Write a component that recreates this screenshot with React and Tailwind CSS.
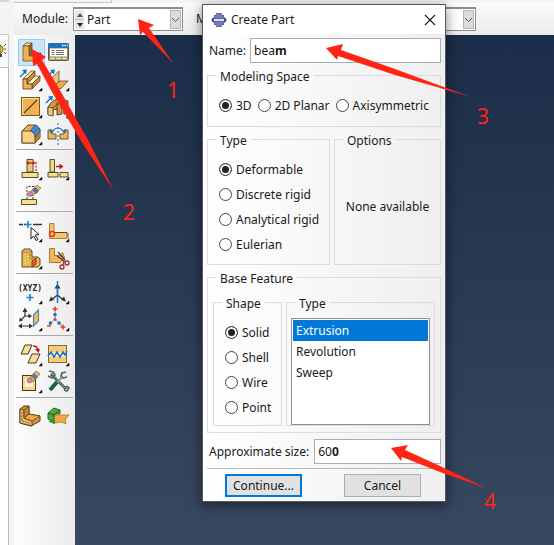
import { useState } from 'react';

const ink = '#4a3a22';

const toolGroups = [
  [
    {
      name: 'Create Part',
      active: true,
      art: (
        <>
          <path d="M5 7l3-3h6l-3 3z" fill="#ffe0a0" stroke={ink} strokeWidth=".7" />
          <path d="M11 7l3-3v9l-3 5z" fill="#9c6a22" stroke={ink} strokeWidth=".7" />
          <path d="M11 17l3-3h9l-3 3z" fill="#a87c38" stroke={ink} strokeWidth=".7" />
          <path d="M20 17l3-3v5l-3 3z" fill="#9c6a22" stroke={ink} strokeWidth=".7" />
          <path d="M5 7h6v10h9v5H5z" fill="#eeb055" stroke="#7a5320" strokeWidth=".8" />
        </>
      ),
    },
    {
      name: 'Part Manager',
      art: (
        <>
          <rect x="3.5" y="4.5" width="20" height="17" rx="1" fill="#8a8a62" stroke="#555a45" />
          <path d="M3 9V6q0-2 2-2h17q2 0 2 2v3z" fill="#1d6fc0" />
          <path d="M17 6.5h1.5M19.5 6.5H21M22 6.5h1" stroke="#fff" strokeWidth="1.4" />
          <path d="M5 9.5h17v8H5z" fill="#fff" />
          <path d="M6.5 11.5h3M6.5 13.5h3M6.5 15.5h3M11 11.5h8M11 13.5h8M11 15.5h8" stroke="#6b6b6b" />
          <path d="M5 18.5h5v2H5zM11 18.5h5v2h-5zM17 18.5h5v2h-5z" fill="#e6dda0" />
        </>
      ),
    },
    {
      name: 'Create Solid Extrude',
      more: true,
      art: (
        <>
          <path d="M5 13l8-8h4l-8 8z" fill="#ffd58c" stroke={ink} strokeWidth=".7" />
          <path d="M9 13l8-8v5l-8 8z" fill="#c88a34" stroke={ink} strokeWidth=".7" />
          <path d="M9 18l8-8h5l-8 8z" fill="#fff0cc" stroke={ink} strokeWidth=".7" />
          <path d="M14 18l8-8v5l-8 8z" fill="#c88a34" stroke={ink} strokeWidth=".7" />
          <path d="M5 13h4v5h5v5H5z" fill="#f2b253" stroke={ink} strokeWidth=".8" />
          <path d="M2 11l5-5" stroke="#1673c9" strokeWidth="1.5" />
          <path d="M4 4l5-.5-1 5z" fill="#1673c9" />
        </>
      ),
    },
    {
      name: 'Create Shell Extrude',
      more: true,
      art: (
        <>
          <path d="M3 10l5-5" stroke="#1673c9" strokeWidth="1.5" />
          <path d="M5 4l5-.5-1 5z" fill="#1673c9" />
          <path d="M7 12l7-7v10l-7 8z" fill="#f3c27b" stroke={ink} strokeWidth=".7" />
          <path d="M7 22.5l7-7.5h9l-7 7.5z" fill="#eda947" stroke={ink} strokeWidth=".7" />
        </>
      ),
    },
    {
      name: 'Create Wire',
      more: true,
      art: (
        <>
          <rect x="3.5" y="4.5" width="18" height="18" fill="#f2b14f" stroke="#77582b" />
          <path d="M4.5 22V5.5h16.5" fill="none" stroke="#ffdf9d" />
          <path d="M6 20L19 7" stroke={ink} strokeWidth="1.1" />
        </>
      ),
    },
    {
      name: 'Create Solid Loft',
      more: true,
      art: (
        <>
          <path d="M3 14q5-9 13-8l7 2v12l-4 1v-7h-2v7l-5 1v-6l-4 1v5l-5-1z" fill="#dd9438" stroke={ink} strokeWidth=".9" />
          <path d="M3 14l5 1v8l-5-1z" fill="#f8c577" stroke={ink} strokeWidth=".8" />
          <path d="M8 15q3-4 8-5l7 1M12 9v8M16 10v5M19 10v11" fill="none" stroke={ink} strokeWidth=".8" />
          <path d="M1 10l5-5" stroke="#1673c9" strokeWidth="1.5" />
          <path d="M3 3.5l5-.5-1 5z" fill="#1673c9" />
        </>
      ),
    },
    {
      name: 'Create Round or Fillet',
      more: true,
      art: (
        <>
          <path d="M4 11l6-6h7l5 4v9l-5 5H4z" fill="#f1ad4b" stroke={ink} strokeWidth=".9" />
          <path d="M17 17l5-5v6l-5 5z" fill="#b77a2b" />
          <path d="M4 11h8q5 1 5 6v6H4z" fill="#ffd084" stroke={ink} strokeWidth=".8" />
          <path d="M12 11l5-6q5 1 5 7l-5 5q0-5-5-6z" fill="#4b83c7" stroke="#31547e" strokeWidth=".8" />
        </>
      ),
    },
    {
      name: 'Create Mirror',
      art: (
        <>
          <path d="M3 10h4v4h4v5H3zM23 10h-4v4h-4v5h8z" fill="#f0b45b" stroke={ink} strokeWidth=".8" />
          <path d="M13 3v22" stroke="#3f83bd" strokeWidth="1.2" strokeDasharray="2 2" />
          <path d="M7 12q6-8 12 0" fill="none" stroke="#1673c9" strokeWidth="1.1" />
          <path d="M17 12l4 1v-4zM9 12l-4 1v-4z" fill="#1673c9" />
        </>
      ),
    },
  ],
  [
    {
      name: 'Edit Feature',
      more: true,
      art: (
        <>
          <path d="M9 4.5h6V17H9z" fill="#e8cb7e" stroke={ink} strokeWidth=".9" />
          <path d="M4 17.5h16v5H4z" fill="#f3df8c" stroke={ink} strokeWidth=".9" />
          <path d="M18 7v10" stroke="#c51818" strokeWidth="1.2" strokeDasharray="2 1.5" />
          <path d="M9 8h7" stroke="#c51818" strokeWidth="1.2" />
          <path d="M11 6v4L8.5 8zM15 6v4l2.5-2z" fill="#c51818" />
        </>
      ),
    },
    {
      name: 'Suppress Feature',
      more: true,
      art: (
        <>
          <path d="M5 4.5h4.5V17H5z" fill="#f0d982" stroke={ink} strokeWidth=".9" />
          <path d="M3 17.5h10v4.5H3zM15 17.5h8v4.5h-8z" fill="#f3df8c" stroke={ink} strokeWidth=".9" />
          <path d="M11 11.5h5" stroke="#c51818" strokeWidth="1.5" />
          <path d="M14.5 8.5v6l4-3z" fill="#c51818" />
        </>
      ),
    },
    {
      name: 'Delete Feature',
      art: (
        <>
          <path d="M9 17V4.5h7M15 17v-4" fill="none" stroke="#333" strokeDasharray="2 1.5" />
          <path d="M3.5 17.5h15v5h-15z" fill="#f3df8c" stroke={ink} strokeWidth=".9" />
          <path d="M11 11l8-8 4 3-8 8z" fill="#eeb363" stroke="#93662f" strokeWidth=".7" />
          <path d="M14 8l3-3 4 4-3 3z" fill="#5d6c92" />
          <circle cx="12" cy="12" r="2.5" fill="#cf8c9a" stroke="#8b5662" strokeWidth=".6" />
        </>
      ),
    },
  ],
  [
    {
      name: 'Create Datum Point',
      more: true,
      art: (
        <>
          <path d="M1 7.5h4M6 7.5h2M15 7.5h9" stroke="#333" strokeWidth="1.3" />
          <path d="M10 4v7M6.5 7.5h7" stroke="#1683dc" strokeWidth="1.6" />
          <path d="M13 10.5l8 7-4 .5 3 4.5-2 1-2.5-4.5-2.5 3z" fill="#fff" stroke="#222" />
        </>
      ),
    },
    {
      name: 'Partition Edge',
      more: true,
      art: (
        <>
          <path d="M4.5 6.5H9v9h13v6H4.5z" fill="#f0c56b" stroke="#a58340" />
          <path d="M9 15.5h13l1 1v5" fill="none" stroke={ink} strokeWidth=".8" />
          <circle cx="7" cy="17" r="2.5" fill="none" stroke="#ed3a1c" strokeWidth="1.5" />
        </>
      ),
    },
    {
      name: 'Partition Cell',
      more: true,
      art: (
        <>
          <path d="M4 7l2-2h6l2 2v6h6l2 2v6l-2 2H4z" fill="#e5bb50" stroke={ink} strokeWidth=".9" />
          <path d="M5 8h7v7h6M14 7l-2 1" fill="none" stroke="#8b6b2d" strokeWidth=".9" strokeDasharray="2 1" />
          <path d="M7 10v10M10 12v9" stroke="#fff0a4" strokeDasharray="1 2" />
          <path d="M14 17l4-3v6l-4 3z" fill="#ec552e" stroke="#9d1d0f" strokeWidth=".8" />
        </>
      ),
    },
    {
      name: 'Trim Geometry',
      art: (
        <>
          <path d="M4.5 4.5h5v7h5l3-3 2 5-4 5h-11z" fill="#efb65b" stroke="#9b702d" strokeWidth=".9" />
          <path d="M13 8l7 8M12 12l6 4" stroke="#333" strokeWidth="1.2" />
          <circle cx="17" cy="23" r="2" fill="none" stroke="#a52c2c" strokeWidth="1.3" />
          <circle cx="22" cy="19" r="2" fill="none" stroke="#a52c2c" strokeWidth="1.3" />
          <path d="M18 21l1-5M20 18l-4-3" stroke="#a52c2c" strokeWidth="1.2" />
        </>
      ),
    },
  ],
  [
    {
      name: 'Create Datum by Coordinates',
      more: true,
      art: (
        <>
          <text x="12" y="12" textAnchor="middle" fontSize="8" fontWeight="700" fill="#222" fontFamily="DejaVu Sans Mono, monospace">
            (XYZ)
          </text>
          <path d="M12 15v7M8.5 18.5h7" stroke="#1683dc" strokeWidth="1.6" />
        </>
      ),
    },
    {
      name: 'Create Datum Axis',
      more: true,
      art: (
        <>
          <path d="M12.5 8v8l-6 5M12.5 16l6 5" fill="none" stroke="#333" strokeWidth="1.3" />
          <path d="M12.5 4.5l-3 5h6zM4 22.5l2-5 3 3.5zM21 22.5l-2-5-3 3.5z" fill="#333" />
          <path d="M12.5 2v22" stroke="#1673c9" strokeWidth="1.4" />
        </>
      ),
    },
    {
      name: 'Create Datum Plane',
      more: true,
      art: (
        <>
          <path d="M15.5 9l5-5v11l-5 5z" fill="#f3bb60" stroke="#4f83ba" strokeWidth="1.2" />
          <path d="M7 4v6l-4 4M7 10h5M3 20h9" fill="none" stroke="#333" strokeWidth="1.2" />
          <path d="M7 1.5L4.5 6h5zM1 15.5l4-1-3-3zM14 10l-3.5-2.5v5zM0 20l4-2.5v5zM15 20l-4-2.5v5z" fill="#333" />
        </>
      ),
    },
    {
      name: 'Create Datum CSYS',
      more: true,
      art: (
        <>
          <path d="M10 3v10M10 13l-6 6M10 13l7 7" fill="none" stroke="#666" strokeDasharray="2 1.5" />
          <path d="M10 .5v5M7.5 3h5M18 18.5v5M15.5 21h5" stroke="#ed3a1c" strokeWidth="1.5" />
          <circle cx="10" cy="8.5" r="1.8" fill="#1673c9" />
          <circle cx="10" cy="13.5" r="1.6" fill="#ed3a1c" />
          <circle cx="5.5" cy="17" r="1.8" fill="#1673c9" />
          <circle cx="14" cy="17" r="1.8" fill="#1673c9" />
          <path d="M2 20h4" stroke="#ed3a1c" strokeWidth="1.5" />
        </>
      ),
    },
  ],
  [
    {
      name: 'Translate Part',
      more: true,
      art: (
        <>
          <path d="M7 4h7l-4 9H3zM14 13h8l-4 9h-8z" fill="#f6df96" stroke={ink} />
          <path d="M15 5q5 0 5 5" fill="none" stroke="#c51818" strokeWidth="1.5" />
          <path d="M17 8h5l-1.5 4z" fill="#c51818" />
        </>
      ),
    },
    {
      name: 'Repair Geometry',
      more: true,
      art: (
        <>
          <rect x="3.5" y="4.5" width="18" height="17" fill="#f6cd72" stroke="#7d6b44" />
          <path d="M4 11h17v5H4z" fill="#fff0ba" />
          <path d="M3 15l3-4 3 5 3-5 3 5 3-5 2 3 2-4" fill="none" stroke="#1673c9" strokeWidth="1.5" />
        </>
      ),
    },
    {
      name: 'Clear Region',
      more: true,
      art: (
        <>
          <rect x="4.5" y="7.5" width="13" height="15" fill="#f4d885" stroke={ink} />
          <path d="M7 11h8v8H7z" fill="#fff4ca" />
          <path d="M11 11l7-8 4 3-7 8z" fill="#edb267" stroke="#93662f" strokeWidth=".7" />
          <path d="M13 8l3-3 4 4-3 3z" fill="#67769a" />
          <circle cx="11.5" cy="12.5" r="2.5" fill="#cf8c9a" stroke="#8b5662" strokeWidth=".6" />
        </>
      ),
    },
    {
      name: 'Part Tools',
      art: (
        <>
          <path d="M6 6l15 15" stroke="#3b4a4a" strokeWidth="2.6" />
          <path d="M7 6l13 14" stroke="#a7b8b9" />
          <path d="M4 3l4 1 2 3-3 3-4-2M19 22l3 1 2-3-3-2" fill="none" stroke="#536363" strokeWidth="1.7" />
          <path d="M21 4l-4 1-1 3 2 2 4-1" fill="none" stroke="#536363" strokeWidth="1.8" />
          <path d="M17 9l-5 6" stroke="#899a9b" strokeWidth="2" />
          <path d="M12 14l-7 8" stroke="#17623f" strokeWidth="4" />
        </>
      ),
    },
  ],
  [
    {
      name: 'Assembly Part',
      art: (
        <>
          <path d="M2 6l4-3h5v8l11 2v5l-9 5-11-3z" fill="#dc9233" stroke={ink} />
          <path d="M2 6l4 1v8l8 3v5L2 20z" fill="#f5b75b" stroke="#5c441f" strokeWidth=".9" />
          <path d="M6 7l5-4v8l-5 4z" fill="#c98530" stroke="#5c441f" strokeWidth=".8" />
          <path d="M6 15l5-4 11 2-8 5z" fill="#f0ac4b" stroke="#5c441f" strokeWidth=".8" />
          <path d="M4 9v9l8 2" fill="none" stroke="#4d79a0" strokeDasharray="2 1" />
        </>
      ),
    },
    {
      name: 'Replace Part',
      art: (
        <>
          <path d="M3 10l6-5 6 2v4H9v2h3v5l-2 1-7-3z" fill="#4caa3d" stroke="#236b2a" />
          <path d="M3 10l6 2 6-5M9 12v6" fill="none" stroke="#1d5b27" />
          <path d="M10 12h14l-4 5 1 4-5-2-7 1z" fill="#eda94b" stroke="#b77721" strokeWidth=".8" />
          <path d="M4 18l5 2v-3" fill="none" stroke="#239432" strokeWidth="1.8" />
        </>
      ),
    },
  ],
];

const arrows = [
  '138,19 154,25 149,28 173,63 143,32 140,35',
  '32,49 46,57 42,60 61,92 88,140 114,191 83,144 52,92 37,64 33,66',
  '326,48 343,44 341,50 395,69 471,97 395,75 338,56 337,60',
  '391,448 408,445 405,450 440,466 486,488 440,472 402,457 401,461',
];

const steps = [
  { label: '1', x: 167, y: 98 },
  { label: '2', x: 123, y: 220 },
  { label: '3', x: 477, y: 124 },
  { label: '4', x: 484, y: 509 },
];

function ToolButton({ tool }) {
  return (
    <button
      type="button"
      aria-label={tool.name}
      className={`h-[27px] w-[27px] ${tool.active ? 'bg-[#cce4f7] outline outline-1 -outline-offset-1 outline-[#99cdf5]' : ''}`}
    >
      <svg viewBox="0 0 27 27" className="block h-full w-full" aria-hidden="true">
        {tool.art}
        {tool.more && <path d="M24 22v3h-3z" fill="#111" stroke="#111" strokeWidth=".5" />}
      </svg>
    </button>
  );
}

function Chevron() {
  return (
    <span className="pointer-events-none flex w-[11px] items-center justify-center border border-[#b5b5b5] bg-[#dcdcdc]">
      <svg viewBox="0 0 9 6" className="h-[6px] w-[9px] shrink-0" aria-hidden="true">
        <path d="M1 1l3.5 3.5L8 1" fill="none" stroke="#555" />
      </svg>
    </span>
  );
}

function TypedInput({ id, initial }) {
  const [value, setValue] = useState(initial);
  return (
    <div className="grid h-[25px] min-w-0 flex-1 items-center border border-[#abadb3] bg-white">
      <span aria-hidden="true" className="col-start-1 row-start-1 px-[3px]">
        {value.slice(0, -1)}
        <b>{value.slice(-1)}</b>
      </span>
      <input
        id={id}
        value={value}
        onChange={(e) => setValue(e.target.value)}
        className="col-start-1 row-start-1 w-full min-w-0 bg-transparent px-[3px] text-transparent caret-black outline-none"
      />
    </div>
  );
}

function Group({ title, className = '', children }) {
  return (
    <fieldset className={`min-w-0 border border-[#dcdcdc] ${className}`}>
      <legend className="ml-2 px-1 pt-1 leading-4">{title}</legend>
      {children}
    </fieldset>
  );
}

function Radios({ name, options, value, onChange, className }) {
  return (
    <div className={className}>
      {options.map((option) => (
        <label key={option} className="flex h-[25px] items-center gap-1 whitespace-nowrap">
          <input
            type="radio"
            name={name}
            checked={value === option}
            onChange={() => onChange(option)}
            className="h-[13px] w-[13px] shrink-0 appearance-none rounded-full border border-[#444] bg-white checked:bg-[#222] checked:shadow-[inset_0_0_0_2px_white]"
          />
          {option}
        </label>
      ))}
    </div>
  );
}

function CreatePartDialog() {
  const [space, setSpace] = useState('3D');
  const [type, setType] = useState('Deformable');
  const [shape, setShape] = useState('Solid');
  const [feature, setFeature] = useState('Extrusion');

  return (
    <section
      role="dialog"
      aria-labelledby="dialog-title"
      className="absolute left-[202px] top-1 w-[244px] border border-[#55585e] bg-linear-to-r from-white to-[#efefef] shadow-[0_3px_12px_rgba(0,0,0,0.5)]"
    >
      <header className="flex h-[29px] items-center bg-white px-2">
        <svg viewBox="0 0 16 16" className="h-4 w-4" aria-hidden="true">
          <path d="M5 1h6v2h2v3H3V3h2zM3 10h10v3h-2v2H5v-2H3z" fill="#6269a8" />
          <path d="M1 6h14v1H1zM1 9h14v1H1z" fill="#6269a8" />
          <path d="M0 8l3-3v6zM16 8l-3-3v6z" fill="#464e91" />
          <path d="M3 7h10v2H3z" fill="#dfe1f1" />
          <path d="M5 3h6M4 5h8M4 11h8M5 13h6" stroke="#9ba0ce" strokeWidth=".7" />
        </svg>
        <h1 id="dialog-title" className="ml-1 flex-1">Create Part</h1>
        <button type="button" aria-label="Close" className="p-px">
          <svg viewBox="0 0 12 12" className="h-3 w-3" aria-hidden="true">
            <path d="M1 1l10 10M11 1L1 11" stroke="#222" strokeWidth="1.2" />
          </svg>
        </button>
      </header>

      <form className="p-1" onSubmit={(e) => e.preventDefault()}>
        <div className="flex items-center gap-1 pl-[2px]">
          <label htmlFor="part-name">Name:</label>
          <TypedInput id="part-name" initial="beam" />
        </div>

        <Group title="Modeling Space" className="mt-[2px] pb-2">
          <Radios
            name="space"
            options={['3D', '2D Planar', 'Axisymmetric']}
            value={space}
            onChange={setSpace}
            className="flex gap-[6px] pl-[11px] pt-2"
          />
        </Group>

        <div className="mt-[2px] flex gap-1">
          <Group title="Type" className="flex-1 pb-[7px]">
            <Radios
              name="type"
              options={['Deformable', 'Discrete rigid', 'Analytical rigid', 'Eulerian']}
              value={type}
              onChange={setType}
              className="pl-[11px] pt-2"
            />
          </Group>
          <Group title="Options" className="w-[107px]">
            <p className="pt-[50px] text-center">None available</p>
          </Group>
        </div>

        <Group title="Base Feature" className="mt-[2px]">
          <div className="flex gap-1 px-[5px] pb-[6px] pt-[5px]">
            <Group title="Shape" className="w-[69px] pb-1">
              <Radios
                name="shape"
                options={['Solid', 'Shell', 'Wire', 'Point']}
                value={shape}
                onChange={setShape}
                className="pl-[11px] pt-2"
              />
            </Group>
            <Group title="Type" className="flex-1">
              <ul role="listbox" aria-label="Type" className="mx-1 mt-[6px] h-[107px] border border-[#8e9199] bg-white p-px">
                {['Extrusion', 'Revolution', 'Sweep'].map((item) => (
                  <li
                    key={item}
                    role="option"
                    aria-selected={feature === item}
                    onClick={() => setFeature(item)}
                    className={`h-[21px] px-[3px] leading-[21px] ${feature === item ? 'bg-[#0078d7] text-white' : ''}`}
                  >
                    {item}
                  </li>
                ))}
              </ul>
            </Group>
          </div>
        </Group>

        <div className="mt-[6px] flex items-center gap-[5px] pl-[2px]">
          <label htmlFor="approx-size">Approximate size:</label>
          <TypedInput id="approx-size" initial="600" />
        </div>
        <hr className="mt-1 border-[#b9b9b9]" />
        <div className="mt-[5px] flex justify-between pl-[18px] pr-5">
          <button type="submit" className="h-[23px] w-[77px] border-2 border-[#0078d7] bg-[#e1e1e1] leading-4">Continue...</button>
          <button type="button" className="h-[23px] w-[77px] border border-[#adadad] bg-[#e1e1e1] leading-4">Cancel</button>
        </div>
      </form>
    </section>
  );
}

export default function App() {
  return (
    <div className="relative flex min-h-screen overflow-hidden bg-[#f4f4f4] font-['Noto_Sans',sans-serif] text-[12px] leading-4 text-[#1a1a1a]">
      <aside className="flex w-[9px] shrink-0 flex-col border-t-2 border-[#d4d4d4]">
        <div className="mt-8 flex h-[33px] items-center overflow-hidden border-r border-t border-[#c9c9c9] bg-[#fafafa]">
          <svg viewBox="0 0 7 16" className="h-4 w-[7px] shrink-0" aria-hidden="true">
            <path d="M0 2q3 1 3 4t-3 5z" fill="#f5cb2d" stroke="#6c6330" />
            <path d="M0 11h2v3H0z" fill="#444" />
            <path d="M4 3l2-2M4 6h2M4 9l2 2" stroke="#444" />
          </svg>
        </div>
        <div className="flex-1 border-r border-t border-[#b5b9bf] bg-white" />
      </aside>

      <div className="flex min-w-0 flex-1 flex-col pl-[5px]">
        <div className="h-[3px] w-[98px] border-b border-r border-[#c4c4c4]" />
        <div className="flex h-[32px] items-center bg-linear-to-b from-[#fbfbfb] to-[#ececec] pl-2">
          <label htmlFor="module">Module:</label>
          <div className="ml-[5px] flex h-6 w-[110px] border border-t-2 border-[#8d8d8d] bg-white p-px">
            <div className="flex w-[9px] flex-col bg-[#e8e8e8]">
              <button type="button" aria-label="Previous module" className="flex flex-1 items-center justify-center">
                <svg viewBox="0 0 6 4" className="h-1 w-[6px]"><path d="M0 4l3-4 3 4z" fill="#555" /></svg>
              </button>
              <button type="button" aria-label="Next module" className="flex flex-1 items-center justify-center border-t border-[#bbb]">
                <svg viewBox="0 0 6 4" className="h-1 w-[6px]"><path d="M0 0l3 4 3-4z" fill="#222" /></svg>
              </button>
            </div>
            <select id="module" className="min-w-0 flex-1 appearance-none bg-white pl-[3px] outline-none">
              <option>Part</option>
            </select>
            <Chevron />
          </div>
          <label htmlFor="model" className="ml-[13px]">Model:</label>
          <div className="ml-[5px] flex h-6 w-[236px] border border-t-2 border-[#8d8d8d] bg-white p-px">
            <select id="model" className="min-w-0 flex-1 appearance-none bg-white outline-none" />
            <Chevron />
          </div>
        </div>

        <div className="flex flex-1">
          <nav aria-label="Part toolbox" className="w-[61px] shrink-0 bg-linear-to-r from-[#fdfdfd] to-[#ececec] pt-1">
            {toolGroups.map((tools, i) => (
              <div key={i}>
                {i > 0 && <hr className="mx-[2px] mb-[5px] mt-[2px] border-[#a9a9a9]" />}
                <div className="grid grid-cols-[27px_27px] pl-1">
                  {tools.map((tool) => <ToolButton key={tool.name} tool={tool} />)}
                </div>
              </div>
            ))}
          </nav>
          <main className="flex-1 bg-linear-to-b from-[#1b2d48] to-[#384860]" />
        </div>
      </div>

      <CreatePartDialog />

      <svg viewBox="0 0 554 545" className="pointer-events-none absolute left-0 top-0 h-[545px] w-[554px]">
        {arrows.map((points) => <polygon key={points} points={points} fill="#ff2416" />)}
        {steps.map((step) => (
          <text key={step.label} x={step.x} y={step.y} fontSize="21" fill="#ff2416">{step.label}</text>
        ))}
      </svg>
    </div>
  );
}
